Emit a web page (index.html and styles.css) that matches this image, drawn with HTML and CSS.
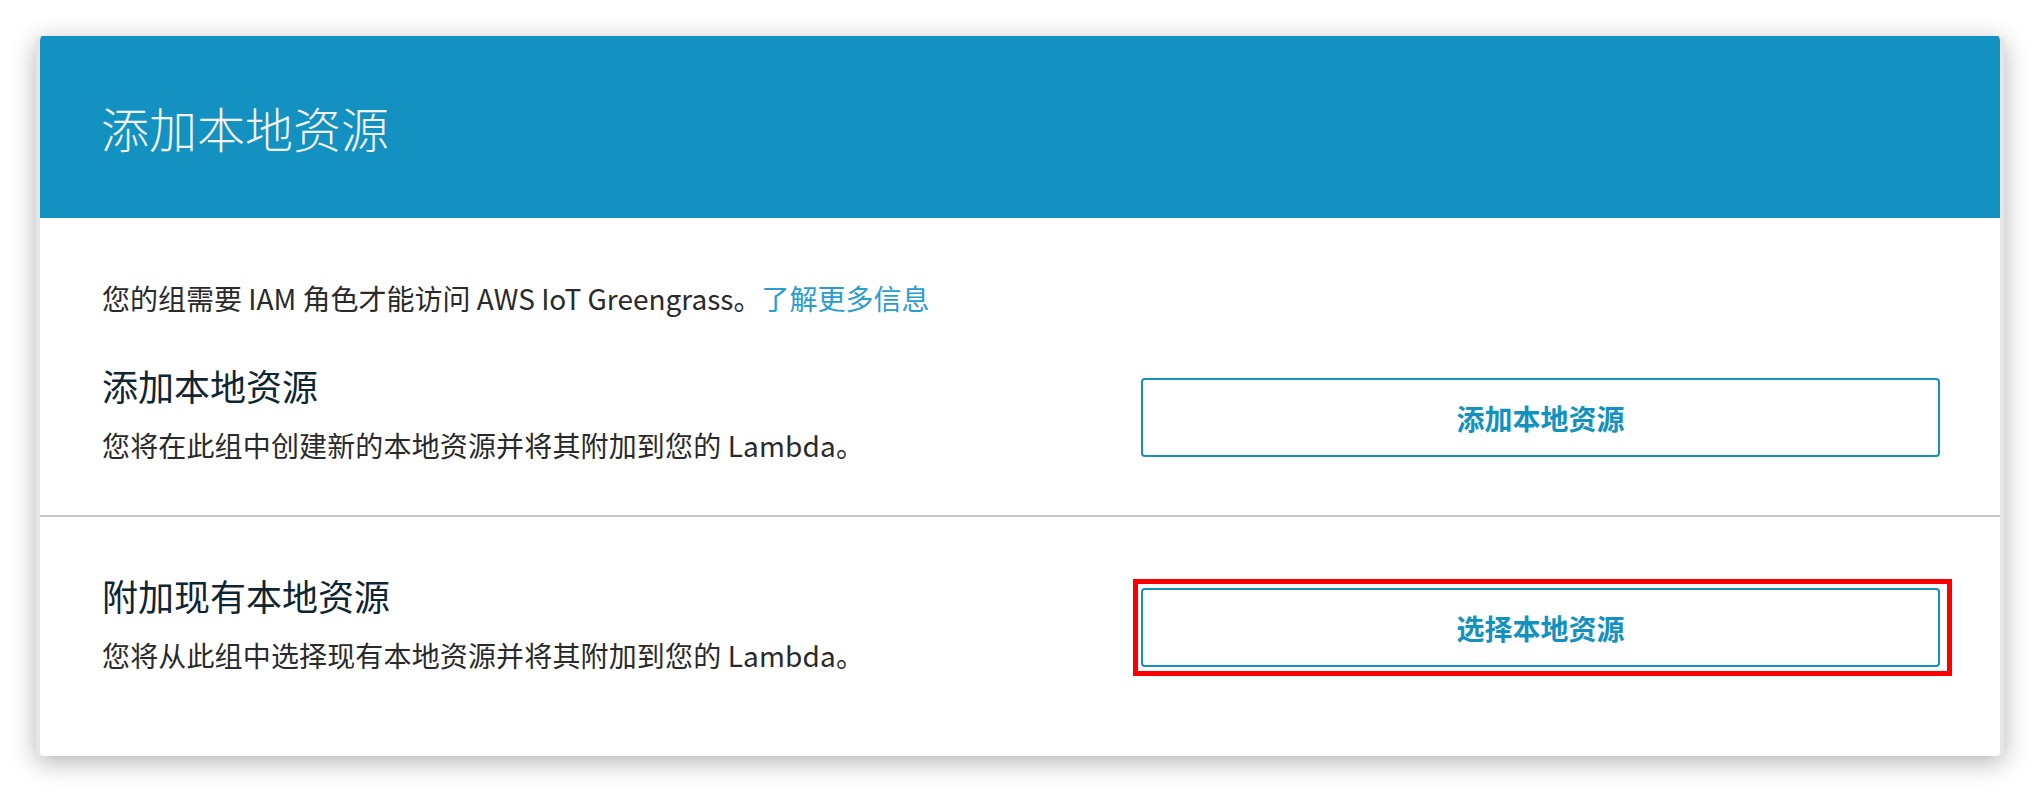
FILE: index.html
```html
<!DOCTYPE html>
<html lang="zh-CN">
<head>
<meta charset="utf-8">
<title>添加本地资源</title>
<link rel="stylesheet" href="styles.css">
</head>
<body>
<div class="dialog">
  <header class="dialog-header">
    <h1 class="dialog-title">添加本地资源</h1>
  </header>
  <section class="section section-first">
    <p class="info">您的组需要 IAM 角色才能访问 AWS IoT Greengrass。<a class="link" href="#">了解更多信息</a></p>
    <div class="row">
      <div class="row-text">
        <h2 class="row-title">添加本地资源</h2>
        <p class="row-desc">您将在此组中创建新的本地资源并将其附加到您的 Lambda。</p>
      </div>
      <button class="btn" type="button">添加本地资源</button>
    </div>
  </section>
  <section class="section section-second">
    <div class="row">
      <div class="row-text">
        <h2 class="row-title">附加现有本地资源</h2>
        <p class="row-desc">您将从此组中选择现有本地资源并将其附加到您的 Lambda。</p>
      </div>
      <div class="btn-wrap highlighted">
        <button class="btn" type="button">选择本地资源</button>
      </div>
    </div>
  </section>
</div>
</body>
</html>
```
FILE: styles.css
```css
* { box-sizing: border-box; }
html, body { margin: 0; padding: 0; background: #ffffff; }
body {
  font-family: "Noto Sans CJK SC", "Noto Sans", sans-serif;
  padding: 36px 36px 38px 36px;
}
.dialog {
  width: 1968px;
  border-left: 4px solid #e6e6e6;
  border-right: 4px solid #e6e6e6;
  border-radius: 6px;
  background: #ffffff;
  box-shadow: 0 6px 26px rgba(0, 0, 0, 0.30);
  overflow: hidden;
}
.dialog-header {
  height: 182px;
  background: #1391c0;
  display: flex;
  align-items: center;
  padding-left: 61px;
}
.dialog-title {
  margin: 0;
  font-size: 48px;
  font-weight: 300;
  color: #f1f1f1;
  line-height: 1;
}
.section { padding-left: 62px; padding-right: 60px; }
.section-first {
  padding-top: 62px;
  padding-bottom: 52px;
  border-bottom: 2px solid #c6c6c6;
}
.section-second {
  padding-top: 59px;
  padding-bottom: 83px;
}
.info {
  margin: 0 0 50px 0;
  font-size: 28px;
  line-height: 36px;
  color: #2a2a2a;
}
.link { color: #2a9ccf; text-decoration: none; }
.row {
  display: grid;
  grid-template-columns: 1fr 799px;
  align-items: center;
}
.row-title {
  margin: -3px 0 20px 0;
  font-size: 36px;
  line-height: 44px;
  font-weight: 400;
  color: #0f2532;
}
.row-desc {
  margin: 0;
  font-size: 28px;
  line-height: 36px;
  color: #2a2a2a;
  letter-spacing: 0.15px;
}
.btn {
  display: block;
  width: 799px;
  height: 79px;
  background: #ffffff;
  border: 2px solid #1391c0;
  border-radius: 4px;
  font-family: inherit;
  font-size: 28px;
  font-weight: 700;
  color: #1391c0;
  padding: 0;
  margin-top: 6px;
}
.btn-wrap { position: relative; }
.highlighted::after {
  content: "";
  position: absolute;
  top: -3px;
  bottom: -9px;
  left: -8px;
  right: -12px;
  border: 5px solid #ff0000;
  pointer-events: none;
}
```
